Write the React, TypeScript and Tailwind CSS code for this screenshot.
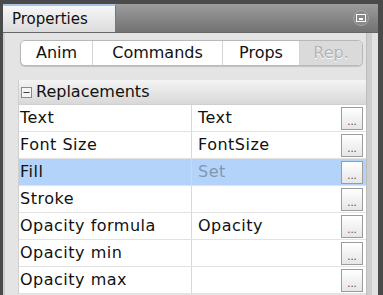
import { Minus } from 'lucide-react';

const rows = [
  { name: 'Text', value: 'Text' },
  { name: 'Font Size', value: 'FontSize' },
  { name: 'Fill', value: 'Set', selected: true },
  { name: 'Stroke', value: '' },
  { name: 'Opacity formula', value: 'Opacity' },
  { name: 'Opacity min', value: '' },
  { name: 'Opacity max', value: '' },
];

const tabs = [
  { label: 'Anim', w: 'w-[72px]' },
  { label: 'Commands', w: 'w-[130px]' },
  { label: 'Props', w: 'w-[77px]' },
];

function DockIcon() {
  return (
    <div className="w-[16px] h-[16px] rounded-full bg-[#888] border border-[#a5a5a5] flex items-center justify-center">
      <div className="w-[10px] h-[8px] border-[1.5px] border-white flex items-end justify-center pb-[1px]">
        <div className="w-[4px] h-[2px] bg-white" />
      </div>
    </div>
  );
}

export default function App() {
  return (
    <div
      className="w-[383px] h-[295px] overflow-hidden bg-[#4a4a4a] flex flex-col pt-[4px] pl-[3px] pr-[5px]"
      style={{ fontFamily: '"DejaVu Sans", "Liberation Sans", sans-serif' }}
    >
      {/* Header */}
      <div className="h-[29px] flex shrink-0 bg-gradient-to-b from-[#9c9c9c] to-[#727272] border-b border-[#666]">
        <div className="w-[113px] h-full bg-gradient-to-b from-[#f6f6f6] to-[#dcdcdc] border-t-[2px] border-t-[#a8c4e4] border-r border-r-[#777] flex items-center pl-[9px] text-[15px] text-[#111]">
          Properties
        </div>
        <div className="flex-1 flex items-center justify-end pr-[9px]">
          <DockIcon />
        </div>
      </div>

      {/* Body */}
      <div className="flex-1 flex bg-[#e4e4e4] border-l-[2px] border-[#cfcfcf] min-h-0">
        <div className="flex-1 flex flex-col pl-[13px] pt-[7px] min-w-0">
          {/* Segmented tabs */}
          <div className="ml-[2px] h-[26px] w-[343px] flex rounded-[5px] border border-[#b8b8b8] shadow-[0_1px_1px_rgba(0,0,0,0.15)] overflow-hidden bg-white text-[16px] text-[#111]">
            {tabs.map((t) => (
              <div
                key={t.label}
                className={`${t.w} h-full flex items-center justify-center border-r border-[#d4d4d4]`}
              >
                {t.label}
              </div>
            ))}
            <div className="flex-1 h-full flex items-center justify-center bg-[#dadada] text-[#b4b4b4] [text-shadow:0_1px_0_#fff]">
              Rep.
            </div>
          </div>

          {/* Table */}
          <div className="mt-[14px] w-[348px] flex flex-col border-l border-[#d0d0d0] text-[16px] text-[#111]">
            <div className="h-[25px] flex items-center bg-gradient-to-b from-[#f4f4f4] to-[#d8d8d8] border-b border-[#cfcfcf]">
              <div className="ml-[2px] w-[11px] h-[11px] border border-[#8a8a8a] bg-[#f4f4f4] flex items-center justify-center">
                <Minus className="w-[9px] h-[9px] text-[#333]" strokeWidth={2.5} />
              </div>
              <span className="ml-[4px]">Replacements</span>
            </div>
            {rows.map((r) => (
              <div
                key={r.name}
                className={`h-[27px] flex border-b border-[#e2e2e2] tracking-[0.5px] ${r.selected ? 'bg-[#b3d3fa]' : 'bg-white'}`}
              >
                <div className="w-[173px] flex items-center pl-[1px] border-r border-[#d8d8d8]">
                  {r.name}
                </div>
                <div className={`flex-1 flex items-center pl-[6px] ${r.selected ? 'text-[#8497b0]' : ''}`}>
                  {r.value}
                </div>
                <div className="w-[26px] flex items-center pl-[1px]">
                  <div className="w-[22px] h-[23px] border border-[#9c9c9c] bg-gradient-to-b from-white to-[#e6e6e6] flex items-end justify-center pb-[2px] text-[10px] leading-none tracking-normal text-[#444]">
                    ...
                  </div>
                </div>
              </div>
            ))}
          </div>
        </div>
        <div className="w-[6px] bg-[#cdcdcd] border-l border-[#bdbdbd]" />
        <div className="w-[6px] bg-[#e2e2e2]" />
      </div>
    </div>
  );
}
